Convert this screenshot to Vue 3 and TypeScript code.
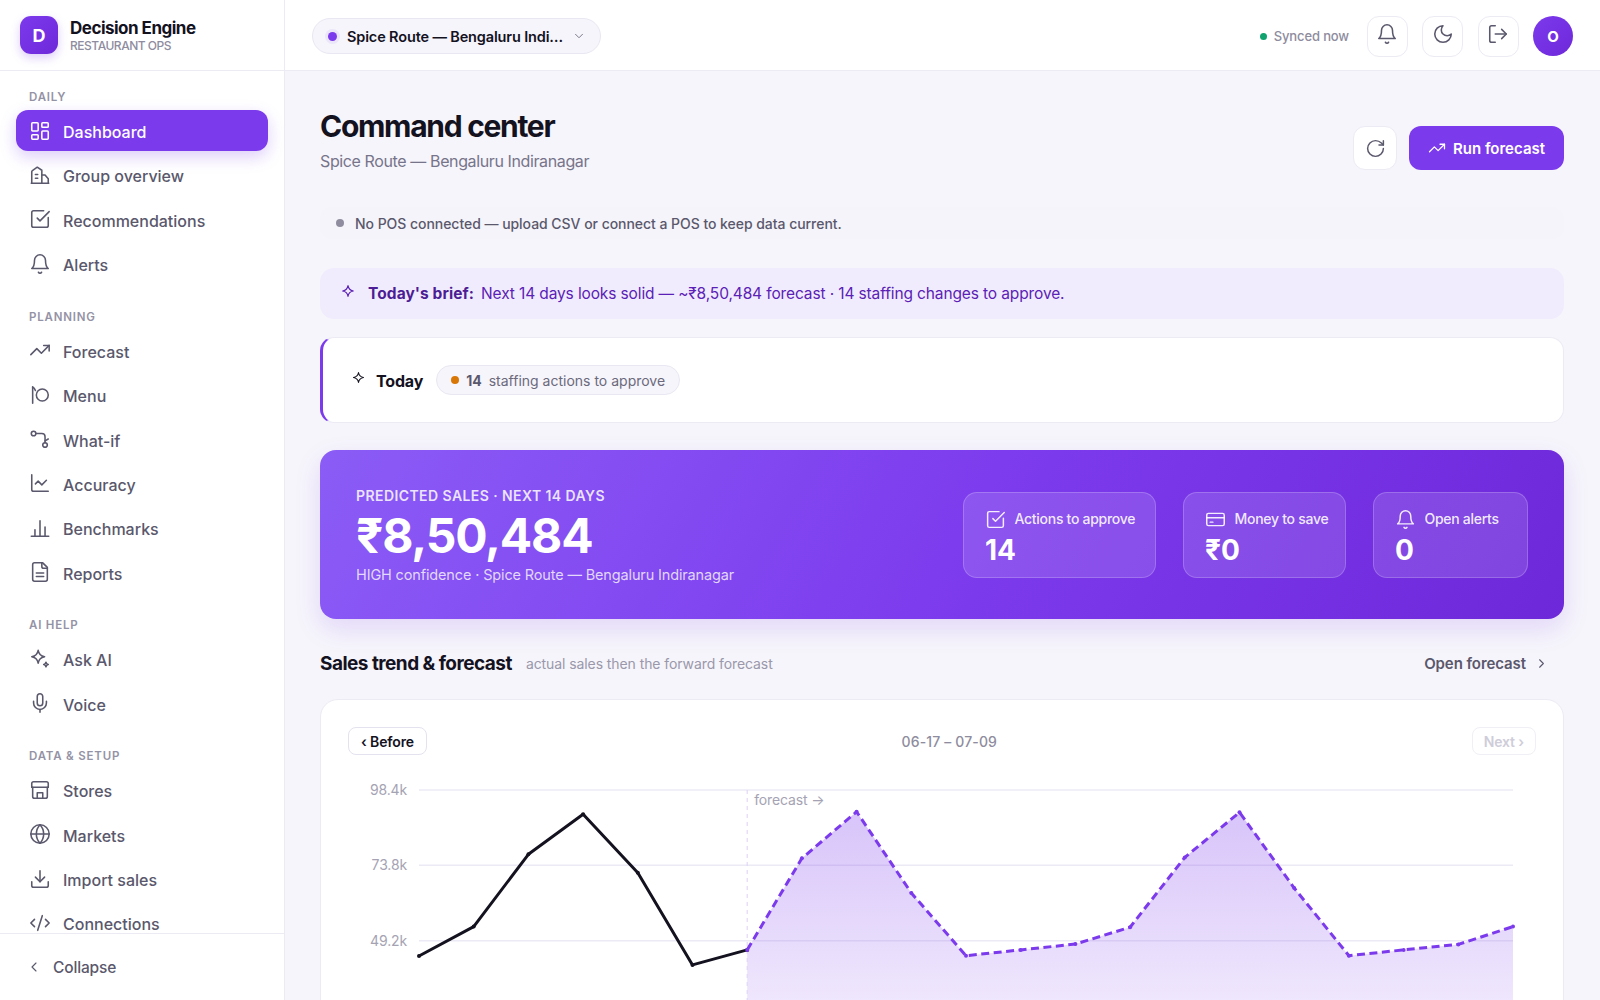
<template>
  <div class="shell">
    <!-- sidebar -->
    <aside class="sidebar">
      <div class="brand">
        <div class="brand-mark">D</div>
        <div class="brand-text">
          <div class="brand-name">Decision Engine</div>
          <div class="brand-sub">RESTAURANT OPS</div>
        </div>
      </div>
      <nav class="nav">
        <section v-for="group in navGroups" :key="group.label" class="nav-group">
          <div class="nav-label">{{ group.label }}</div>
          <a
            v-for="item in group.items"
            :key="item.label"
            class="nav-item"
            :class="{ active: item.label === 'Dashboard' }"
          >
            <Icon :name="item.icon" :size="22" />
            <span>{{ item.label }}</span>
          </a>
        </section>
      </nav>
      <div class="collapse-row">
        <Icon name="chevronLeft" :size="16" />
        <span>Collapse</span>
      </div>
    </aside>

    <div class="main">
      <!-- top bar -->
      <header class="topbar">
        <div class="store-picker">
          <span class="store-dot"></span>
          <span class="store-name">Spice Route — Bengaluru Indiranagar</span>
          <Icon name="chevronDown" :size="14" class="store-chevron" />
        </div>
        <div class="topbar-right">
          <div class="sync"><span class="sync-dot"></span>Synced now</div>
          <button class="icon-btn"><Icon name="bell" :size="22" /></button>
          <button class="icon-btn"><Icon name="moon" :size="22" /></button>
          <button class="icon-btn"><Icon name="logout" :size="22" /></button>
          <div class="avatar">O</div>
        </div>
      </header>

      <main class="content">
        <div class="page-head">
          <div>
            <h1>Command center</h1>
            <p class="page-sub">Spice Route — Bengaluru Indiranagar</p>
          </div>
          <div class="page-actions">
            <button class="refresh-btn"><Icon name="refresh" :size="21" /></button>
            <button class="run-btn"><Icon name="trend" :size="18" />Run forecast</button>
          </div>
        </div>

        <div class="notice">
          <span class="notice-dot"></span>
          No POS connected — upload CSV or connect a POS to keep data current.
        </div>

        <div class="brief">
          <Icon name="star" :size="16" class="brief-icon" />
          <strong>Today's brief:</strong>
          <span>Next 14 days looks solid — ~₹8,50,484 forecast · 14 staffing changes to approve.</span>
        </div>

        <div class="today">
          <Icon name="star" :size="15" class="today-icon" />
          <span class="today-title">Today</span>
          <span class="today-pill">
            <span class="pill-dot"></span>
            <b>14</b>
            staffing actions to approve
          </span>
        </div>

        <div class="hero">
          <div class="hero-left">
            <div class="hero-label">PREDICTED SALES · NEXT 14 DAYS</div>
            <div class="hero-value">₹8,50,484</div>
            <div class="hero-sub">HIGH confidence · Spice Route — Bengaluru Indiranagar</div>
          </div>
          <div class="hero-stats">
            <div v-for="stat in heroStats" :key="stat.label" class="stat">
              <div class="stat-label"><Icon :name="stat.icon" :size="21" />{{ stat.label }}</div>
              <div class="stat-value">{{ stat.value }}</div>
            </div>
          </div>
        </div>

        <div class="section-head">
          <h2>Sales trend &amp; forecast</h2>
          <span class="section-sub">actual sales then the forward forecast</span>
          <a class="section-link">Open forecast <Icon name="chevronRight" :size="15" /></a>
        </div>

        <div class="chart-card">
          <div class="chart-nav">
            <button class="page-btn">‹ Before</button>
            <span class="chart-range">06-17 – 07-09</span>
            <button class="page-btn disabled">Next ›</button>
          </div>
          <svg class="chart" width="1188" height="340" viewBox="0 0 1188 340">
            <defs>
              <linearGradient id="fcFill" x1="0" y1="0" x2="0" y2="1">
                <stop offset="0" stop-color="#7c3aed" stop-opacity="0.3" />
                <stop offset="1" stop-color="#7c3aed" stop-opacity="0.02" />
              </linearGradient>
            </defs>
            <g v-for="tick in ticks" :key="tick">
              <line :x1="plotLeft" :x2="plotRight" :y1="yOf(tick)" :y2="yOf(tick)" class="grid-line" />
              <text :x="plotLeft - 12" :y="yOf(tick) + 5" text-anchor="end" class="axis-text">{{ tick }}k</text>
            </g>
            <path :d="areaPath" fill="url(#fcFill)" />
            <line :x1="splitX" :x2="splitX" :y1="yOf(98.4)" y2="340" class="split-line" />
            <text :x="splitX + 7" y="35" class="axis-text">forecast →</text>
            <polyline :points="actualLine" class="line-actual" />
            <circle v-for="(p, i) in actualPts" :key="'a' + i" :cx="p[0]" :cy="p[1]" r="2" fill="#14121f" />
            <polyline :points="forecastLine" class="line-forecast" />
            <circle v-for="(p, i) in forecastPts" :key="'f' + i" :cx="p[0]" :cy="p[1]" r="2" fill="#7c3aed" />
          </svg>
        </div>
      </main>
    </div>
  </div>
</template>

<script setup lang="ts">
import { h } from 'vue'

// lucide-style stroke icons
const iconPaths: Record<string, string[]> = {
  dashboard: [
    'M4 3h5a1 1 0 0 1 1 1v7a1 1 0 0 1-1 1H4a1 1 0 0 1-1-1V4a1 1 0 0 1 1-1z',
    'M15 3h5a1 1 0 0 1 1 1v3a1 1 0 0 1-1 1h-5a1 1 0 0 1-1-1V4a1 1 0 0 1 1-1z',
    'M15 12h5a1 1 0 0 1 1 1v7a1 1 0 0 1-1 1h-5a1 1 0 0 1-1-1v-7a1 1 0 0 1 1-1z',
    'M4 16h5a1 1 0 0 1 1 1v3a1 1 0 0 1-1 1H4a1 1 0 0 1-1-1v-3a1 1 0 0 1 1-1z'
  ],
  group: ['M3 21V8.5a1.5 1.5 0 0 1 .7-1.3L9 3.5l5 3.3V21', 'M14 12h3.5L21 16v5', 'M2.5 21h19', 'M7 11.5h2.5', 'M7 15.5h2.5'],
  check: ['M21 10.5V19a2 2 0 0 1-2 2H5a2 2 0 0 1-2-2V5a2 2 0 0 1 2-2h11', 'm9 11 3 3L22 4'],
  bell: ['M6 8a6 6 0 0 1 12 0c0 7 3 9 3 9H3s3-2 3-9', 'M10.3 21a1.94 1.94 0 0 0 3.4 0'],
  trend: ['m22 7-8.5 8.5-5-5L2 17', 'M16 7h6v6'],
  menu: ['M4 3v18', 'M4 3.5c1.5.5 2.5 2 3 3.5', 'M14.5 5.5a6.5 6.5 0 1 0 0 13 6.5 6.5 0 0 0 0-13z'],
  whatif: [
    'M5 3.5a2.5 2.5 0 1 0 0 5 2.5 2.5 0 0 0 0-5z',
    'M7.5 6H14a3.5 3.5 0 0 1 3.5 3.5V16',
    'M17.5 16a2.5 2.5 0 1 0 0 5 2.5 2.5 0 0 0 0-5z',
    'M21 12l-3.5 2'
  ],
  accuracy: ['M3 3v16a2 2 0 0 0 2 2h16', 'm19 9-5 5-4-4-3 3'],
  bars: ['M2.5 21h19', 'M6.5 21v-7', 'M12 21V4', 'M17.5 21V11'],
  file: [
    'M15 2H6a2 2 0 0 0-2 2v16a2 2 0 0 0 2 2h12a2 2 0 0 0 2-2V7Z',
    'M14 2v4a2 2 0 0 0 2 2h4',
    'M16 13H8',
    'M16 17H8'
  ],
  ask: [
    'M10 2.5c.7 4 2.9 6.3 7 7-4.1.7-6.3 3-7 7-.7-4-2.9-6.3-7-7 4.1-.7 6.3-3 7-7z',
    'M18.5 15.5c.3 1.6 1 2.3 2.5 2.5-1.5.2-2.2.9-2.5 2.5-.3-1.6-1-2.3-2.5-2.5 1.5-.2 2.2-.9 2.5-2.5z'
  ],
  star: ['M12 4c.8 4.8 3.2 7.2 8 8-4.8.8-7.2 3.2-8 8-.8-4.8-3.2-7.2-8-8 4.8-.8 7.2-3.2 8-8z'],
  mic: ['M12 2a3 3 0 0 0-3 3v7a3 3 0 0 0 6 0V5a3 3 0 0 0-3-3Z', 'M19 10v2a7 7 0 0 1-14 0v-2', 'M12 19v3'],
  store: [
    'M3 9V5a2 2 0 0 1 2-2h14a2 2 0 0 1 2 2v4',
    'M3 9h18',
    'M4 9v10a2 2 0 0 0 2 2h12a2 2 0 0 0 2-2V9',
    'M9 21v-6h6v6'
  ],
  globe: ['M12 2a10 10 0 1 0 0 20 10 10 0 0 0 0-20z', 'M12 2a14.5 14.5 0 0 0 0 20 14.5 14.5 0 0 0 0-20', 'M2 12h20'],
  download: ['M21 15v4a2 2 0 0 1-2 2H5a2 2 0 0 1-2-2v-4', 'm7 10 5 5 5-5', 'M12 15V3'],
  code: ['m18 16 4-4-4-4', 'm6 8-4 4 4 4', 'm14.5 4-5 16'],
  moon: ['M12 3a6 6 0 0 0 9 9 9 9 0 1 1-9-9Z'],
  logout: ['M9 21H5a2 2 0 0 1-2-2V5a2 2 0 0 1 2-2h4', 'm16 17 5-5-5-5', 'M21 12H9'],
  refresh: ['M21 12a9 9 0 1 1-9-9c2.52 0 4.93 1 6.74 2.74L21 8', 'M21 3v5h-5'],
  card: ['M4 5h16a2 2 0 0 1 2 2v10a2 2 0 0 1-2 2H4a2 2 0 0 1-2-2V7a2 2 0 0 1 2-2z', 'M2 10h20', 'M6 15h3'],
  chevronLeft: ['m15 18-6-6 6-6'],
  chevronRight: ['m9 18 6-6-6-6'],
  chevronDown: ['m6 9 6 6 6-6']
}

const Icon = (props: { name: string; size: number }) =>
  h(
    'svg',
    {
      width: props.size,
      height: props.size,
      viewBox: '0 0 24 24',
      fill: 'none',
      stroke: 'currentColor',
      'stroke-width': 1.7,
      'stroke-linecap': 'round',
      'stroke-linejoin': 'round',
      style: { flex: 'none' }
    },
    iconPaths[props.name].map((d) => h('path', { d }))
  )
Icon.props = ['name', 'size']

const navGroups = [
  {
    label: 'DAILY',
    items: [
      { label: 'Dashboard', icon: 'dashboard' },
      { label: 'Group overview', icon: 'group' },
      { label: 'Recommendations', icon: 'check' },
      { label: 'Alerts', icon: 'bell' }
    ]
  },
  {
    label: 'PLANNING',
    items: [
      { label: 'Forecast', icon: 'trend' },
      { label: 'Menu', icon: 'menu' },
      { label: 'What-if', icon: 'whatif' },
      { label: 'Accuracy', icon: 'accuracy' },
      { label: 'Benchmarks', icon: 'bars' },
      { label: 'Reports', icon: 'file' }
    ]
  },
  {
    label: 'AI HELP',
    items: [
      { label: 'Ask AI', icon: 'ask' },
      { label: 'Voice', icon: 'mic' }
    ]
  },
  {
    label: 'DATA & SETUP',
    items: [
      { label: 'Stores', icon: 'store' },
      { label: 'Markets', icon: 'globe' },
      { label: 'Import sales', icon: 'download' },
      { label: 'Connections', icon: 'code' }
    ]
  }
]

const heroStats = [
  { label: 'Actions to approve', value: '14', icon: 'check' },
  { label: 'Money to save', value: '₹0', icon: 'card' },
  { label: 'Open alerts', value: '0', icon: 'bell' }
]

// chart: values in thousands of rupees
const actual = [44.2, 53.8, 77.4, 90.5, 71.4, 41.3, 46.2]
const forecast = [46.2, 76.1, 91.3, 64.8, 44.3, 46.2, 48.1, 53.6, 76.4, 91.1, 66.4, 44.3, 46.2, 48.0, 53.8]
const ticks = [98.4, 73.8, 49.2]

const plotLeft = 71
const plotRight = 1165
const step = (plotRight - plotLeft) / 20
const splitX = plotLeft + step * 6

const yOf = (v: number) => 20 + (98.4 - v) * 3.063

const actualPts = actual.map((v, i) => [plotLeft + i * step, yOf(v)])
const forecastPts = forecast.map((v, i) => [splitX + i * step, yOf(v)])
const toPoints = (pts: number[][]) => pts.map((p) => p.join(',')).join(' ')
const actualLine = toPoints(actualPts)
const forecastLine = toPoints(forecastPts)
const areaPath = `M${splitX},340 L${forecastPts.map((p) => p.join(',')).join(' L')} L${plotRight},340 Z`
</script>

<style>
html,
body {
  margin: 0;
  height: 100%;
  overflow: hidden;
}
</style>

<style scoped>
.shell {
  display: flex;
  height: 100vh;
  overflow: hidden;
  font-family: 'Inter', 'Noto Sans', sans-serif;
  color: #14121f;
  background: #f6f5fb;
}

button {
  font-family: inherit;
  cursor: pointer;
}

/* sidebar */
.sidebar {
  width: 285px;
  flex: none;
  display: flex;
  flex-direction: column;
  background: #fff;
  border-right: 1px solid #ecebf4;
  box-sizing: border-box;
}

.brand {
  height: 71px;
  flex: none;
  box-sizing: border-box;
  display: flex;
  align-items: center;
  gap: 12px;
  padding: 0 20px;
  border-bottom: 1px solid #ecebf4;
}

.brand-mark {
  width: 38px;
  height: 38px;
  border-radius: 11px;
  background: linear-gradient(135deg, #7c3aed, #6d28d9);
  box-shadow: 0 4px 10px rgba(124, 58, 237, 0.25);
  color: #fff;
  font-weight: 700;
  font-size: 18px;
  display: flex;
  align-items: center;
  justify-content: center;
}

.brand-text {
  padding-top: 2px;
}

.brand-name {
  font-size: 17px;
  font-weight: 700;
  letter-spacing: -0.03em;
  line-height: 20px;
}

.brand-sub {
  font-size: 12px;
  font-weight: 500;
  color: #8e8c9e;
  letter-spacing: -0.04em;
  line-height: 16px;
}

.nav {
  flex: 1;
  min-height: 0;
  overflow: hidden;
  padding: 17px 16px 0;
}

.nav-group {
  margin-bottom: 23.6px;
}

.nav-label {
  font-size: 11.5px;
  font-weight: 600;
  letter-spacing: 0.07em;
  color: #9492a5;
  padding-left: 13px;
  line-height: 18px;
  margin-bottom: 4px;
}

.nav-item {
  display: flex;
  align-items: center;
  gap: 12px;
  height: 41px;
  margin-bottom: 3.4px;
  padding: 0 13px;
  border-radius: 12px;
  font-size: 16px;
  font-weight: 500;
  color: #5a586c;
}

.nav-item span {
  padding-top: 3px;
}

.nav-item.active {
  background: #7c3aed;
  color: #fff;
  box-shadow: 0 6px 16px rgba(124, 58, 237, 0.25);
}

.collapse-row {
  height: 67px;
  flex: none;
  box-sizing: border-box;
  border-top: 1px solid #ecebf4;
  display: flex;
  align-items: center;
  gap: 11px;
  padding: 0 26px;
  font-size: 15.5px;
  font-weight: 500;
  letter-spacing: -0.01em;
  color: #5a586c;
}

/* top bar */
.main {
  flex: 1;
  min-width: 0;
  display: flex;
  flex-direction: column;
}

.topbar {
  height: 71px;
  flex: none;
  box-sizing: border-box;
  display: flex;
  align-items: center;
  justify-content: space-between;
  padding: 2px 27px 0;
  background: #fff;
  border-bottom: 1px solid #ecebf4;
}

.store-picker {
  width: 289px;
  height: 36px;
  box-sizing: border-box;
  display: flex;
  align-items: center;
  padding: 0 14px 0 15px;
  background: #f6f5fb;
  border: 1px solid #e9e7f2;
  border-radius: 18px;
}

.store-dot {
  width: 9px;
  height: 9px;
  flex: none;
  border-radius: 50%;
  background: #7c3aed;
  box-shadow: 0 0 0 3px rgba(124, 58, 237, 0.08);
  margin-right: 10px;
}

.store-name {
  flex: 1;
  min-width: 0;
  overflow: hidden;
  white-space: nowrap;
  text-overflow: ellipsis;
  font-size: 14.5px;
  font-weight: 600;
  letter-spacing: -0.01em;
}

.store-chevron {
  margin-left: 6px;
  color: #7a7889;
}

.topbar-right {
  display: flex;
  align-items: center;
  gap: 14.5px;
}

.sync {
  display: flex;
  align-items: center;
  gap: 7px;
  font-size: 13px;
  font-weight: 500;
  letter-spacing: -0.01em;
  color: #8e8c9e;
  margin-right: 3px;
}

.sync-dot {
  width: 7px;
  height: 7px;
  border-radius: 50%;
  background: #10a36f;
}

.icon-btn {
  width: 41px;
  height: 41px;
  padding: 0;
  display: flex;
  align-items: center;
  justify-content: center;
  background: #fff;
  border: 1px solid #ecebf4;
  border-radius: 12px;
  color: #5a586c;
}

.icon-btn svg {
  margin-top: -4px;
}

.avatar {
  width: 40px;
  height: 40px;
  border-radius: 50%;
  background: linear-gradient(135deg, #7c3aed, #6d28d9);
  color: #fff;
  font-size: 15px;
  font-weight: 700;
  display: flex;
  align-items: center;
  justify-content: center;
}

/* content */
.content {
  flex: 1;
  min-height: 0;
  overflow: hidden;
  padding: 36px 36px 0 35px;
}

.page-head {
  display: flex;
  justify-content: space-between;
  align-items: flex-start;
  margin-bottom: 35px;
}

h1 {
  margin: 0;
  font-size: 30px;
  font-weight: 700;
  letter-spacing: -0.043em;
  line-height: 38px;
}

.page-sub {
  margin: 5px 0 0;
  font-size: 16px;
  letter-spacing: -0.024em;
  line-height: 22px;
  color: #76748a;
}

.page-actions {
  display: flex;
  gap: 12px;
  margin-top: 19px;
}

.refresh-btn {
  width: 44px;
  height: 44px;
  padding: 0;
  display: flex;
  align-items: center;
  justify-content: center;
  background: #fff;
  border: 1px solid #ecebf4;
  border-radius: 12px;
  color: #5a586c;
}

.run-btn {
  height: 44px;
  width: 155px;
  display: flex;
  align-items: center;
  justify-content: center;
  gap: 7px;
  padding: 0;
  background: #7c3aed;
  border: 0;
  border-radius: 12px;
  color: #fff;
  font-size: 15px;
  font-weight: 600;
}

.notice {
  height: 32px;
  display: flex;
  align-items: center;
  gap: 11px;
  padding: 0 16px;
  border-radius: 12px;
  background: #f5f4fa;
  font-size: 14px;
  font-weight: 500;
  letter-spacing: -0.003em;
  color: #5a586c;
  margin-bottom: 29px;
}

.notice-dot {
  width: 8px;
  height: 8px;
  border-radius: 50%;
  background: #8e8c9e;
}

.brief {
  height: 51px;
  box-sizing: border-box;
  display: flex;
  align-items: center;
  padding: 0 20px;
  border-radius: 14px;
  background: #f1ecfd;
  color: #5b21b6;
  font-size: 15.5px;
  letter-spacing: -0.008em;
  margin-bottom: 18px;
}

.brief-icon {
  margin: -5px 12px 0 0;
}

.brief strong {
  font-weight: 700;
  letter-spacing: 0.005em;
  color: #4c1d95;
  margin-right: 7px;
}

.today {
  height: 85.5px;
  box-sizing: border-box;
  display: flex;
  align-items: center;
  padding: 1px 28px 0;
  background: #fff;
  border: 1px solid #ecebf4;
  border-left: 3px solid #7c3aed;
  border-radius: 14px;
  margin-bottom: 27.5px;
}

.today-icon {
  margin: -5px 10px 0 0;
}

.today-title {
  font-size: 16px;
  font-weight: 700;
  letter-spacing: -0.01em;
  margin-right: 13px;
  padding-top: 2px;
}

.today-pill {
  height: 30px;
  box-sizing: border-box;
  display: flex;
  align-items: center;
  gap: 7px;
  padding: 0 14px;
  background: #f6f5fb;
  border: 1px solid #e9e7f2;
  border-radius: 15px;
  font-size: 14px;
  color: #6b697c;
}

.today-pill b {
  font-weight: 700;
  color: #5a586c;
}

.pill-dot {
  width: 8px;
  height: 8px;
  border-radius: 50%;
  background: #d97706;
}

.hero {
  height: 169px;
  box-sizing: border-box;
  display: flex;
  align-items: center;
  justify-content: space-between;
  padding: 0 36px;
  border-radius: 16px;
  background: linear-gradient(120deg, #8b5cf6 0%, #7c3aed 55%, #6d28d9 100%);
  box-shadow: 0 10px 26px rgba(124, 58, 237, 0.16);
  color: #fff;
  margin-bottom: 28px;
}

.hero-left {
  padding-top: 2px;
}

.hero-label {
  font-size: 14px;
  font-weight: 600;
  letter-spacing: 0.03em;
  color: rgba(255, 255, 255, 0.85);
  line-height: 20px;
}

.hero-value {
  font-size: 48px;
  font-weight: 700;
  letter-spacing: -0.025em;
  line-height: 56px;
  margin-top: 2px;
}

.hero-sub {
  font-size: 14.5px;
  letter-spacing: -0.01em;
  color: rgba(255, 255, 255, 0.78);
  line-height: 22px;
}

.hero-stats {
  display: grid;
  grid-template-columns: 193px 163px 155px;
  gap: 27px;
}

.stat {
  height: 86px;
  box-sizing: border-box;
  padding: 16px 0 0 21px;
  border-radius: 14px;
  background: rgba(255, 255, 255, 0.13);
  border: 1px solid rgba(255, 255, 255, 0.2);
  white-space: nowrap;
}

.stat-label {
  display: flex;
  align-items: center;
  gap: 8.5px;
  font-size: 14px;
  font-weight: 500;
  letter-spacing: -0.02em;
  color: rgba(255, 255, 255, 0.9);
  line-height: 20px;
}

.stat-value {
  font-size: 28px;
  font-weight: 700;
  line-height: 34px;
  margin-top: 3px;
}

.section-head {
  display: flex;
  align-items: center;
  height: 32px;
  margin-bottom: 20px;
}

h2 {
  margin: 0;
  font-size: 19px;
  font-weight: 700;
  letter-spacing: -0.028em;
}

.section-sub {
  margin-left: 14px;
  font-size: 14px;
  letter-spacing: -0.006em;
  color: #9a98aa;
}

.section-link {
  margin-left: auto;
  margin-right: 15px;
  display: flex;
  align-items: center;
  gap: 8px;
  font-size: 15px;
  font-weight: 600;
  letter-spacing: -0.005em;
  color: #5a586c;
}

.chart-card {
  box-sizing: border-box;
  padding: 27px 27px 20px;
  background: #fff;
  border: 1px solid #ecebf4;
  border-radius: 18px;
}

.chart-nav {
  display: flex;
  align-items: center;
  justify-content: space-between;
  height: 28px;
  margin-bottom: 15px;
}

.page-btn {
  height: 28px;
  padding: 0 12px;
  background: #fff;
  border: 1px solid #e4e2ef;
  border-radius: 8px;
  font-size: 14px;
  font-weight: 600;
  letter-spacing: -0.01em;
  color: #14121f;
}

.page-btn.disabled {
  padding: 0 11px;
  border-color: #f0eff6;
  color: #cfcdd9;
}

.chart-range {
  font-size: 14px;
  font-weight: 500;
  letter-spacing: 0.01em;
  color: #8e8c9e;
}

.chart {
  display: block;
}

.grid-line {
  stroke: #eceaf5;
  stroke-width: 1.5;
}

.axis-text {
  font-size: 14px;
  fill: #a5a3b3;
  letter-spacing: -0.01em;
}

.split-line {
  stroke: #e0d8f5;
  stroke-width: 1.2;
  stroke-dasharray: 4 4;
}

.line-actual {
  fill: none;
  stroke: #14121f;
  stroke-width: 3;
  stroke-linejoin: round;
}

.line-forecast {
  fill: none;
  stroke: #7c3aed;
  stroke-width: 3;
  stroke-dasharray: 8 4.5;
  stroke-linejoin: round;
}
</style>
